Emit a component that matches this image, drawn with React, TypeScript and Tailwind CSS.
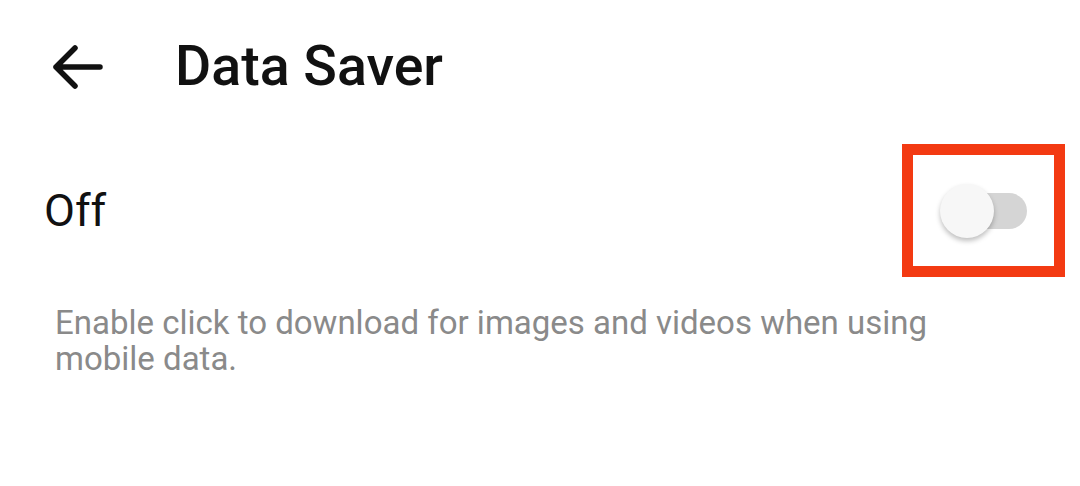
import React from "react";

export default function App() {
  return (
    <div className="w-[1080px] h-[486px] bg-white overflow-hidden" style={{ fontFamily: "Roboto, 'Noto Sans', sans-serif" }}>
      <div className="flex items-center pt-[40px] h-[94px]">
        <div className="ml-[48px] w-[60px] h-[54px] flex items-center justify-center">
          <svg width="60" height="54" viewBox="0 0 60 54" fill="none">
            <path d="M8 27 H52 M27 8 L8 27 L27 46" stroke="#111" strokeWidth="5.5" strokeLinecap="round" strokeLinejoin="round" />
          </svg>
        </div>
        <h1 className="ml-[67px] text-[55.5px] leading-none font-medium text-[#111]">Data Saver</h1>
      </div>
      <div className="flex items-center justify-between mt-[50px] pl-[44px] pr-[15px]">
        <span className="text-[45px] leading-none text-[#111]">Off</span>
        <div className="w-[163px] h-[133px] border-[11px] border-[#f33a12] flex items-center justify-center">
          <div className="relative w-[87px] h-[54px]">
            <div className="absolute right-0 top-[9px] w-[77px] h-[36px] rounded-full bg-[#d5d5d5]" />
            <div className="absolute left-0 top-0 w-[54px] h-[54px] rounded-full bg-[#f7f7f7] shadow-[0_3px_5px_rgba(0,0,0,0.25)]" />
          </div>
        </div>
      </div>
      <p className="mt-[28px] ml-[55px] w-[920px] text-[33px] leading-[36px] text-[#8a8a8a]">
        Enable click to download for images and videos when using mobile data.
      </p>
    </div>
  );
}
